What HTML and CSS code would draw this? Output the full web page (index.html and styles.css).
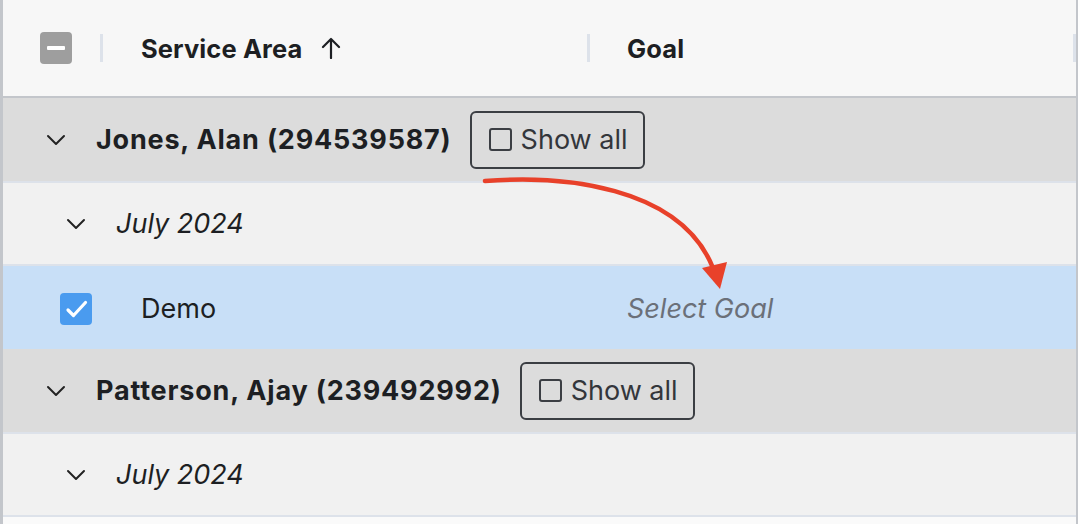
FILE: index.html
```html
<!DOCTYPE html>
<html>
<head>
<meta charset="utf-8">
<link rel="stylesheet" href="styles.css">
</head>
<body>
<div class="page">
  <div class="table">
    <div class="head">
      <div class="col-select">
        <span class="cb cb-mixed"><span class="bar"></span></span>
        <span class="sep"></span>
      </div>
      <div class="col-area">
        <span class="th">Service Area</span>
        <svg class="sort" width="20" height="22" viewBox="0 0 20 22"><path d="M10 21V2M2 10l8-8 8 8" fill="none" stroke="#1d1f23" stroke-width="2.2" stroke-linecap="round" stroke-linejoin="round"/></svg>
        <span class="sep sep-end"></span>
      </div>
      <div class="col-goal">
        <span class="th">Goal</span>
        <span class="sep sep-end"></span>
      </div>
    </div>

    <div class="row group">
      <svg class="chev" width="20" height="12" viewBox="0 0 20 12"><path d="M2 2l8 8 8-8" fill="none" stroke="#222" stroke-width="2" stroke-linecap="round" stroke-linejoin="round"/></svg>
      <span class="gname">Jones, Alan (294539587)</span>
      <span class="showall"><span class="box"></span>Show all</span>
    </div>
    <div class="row sub">
      <svg class="chev" width="20" height="12" viewBox="0 0 20 12"><path d="M2 2l8 8 8-8" fill="none" stroke="#222" stroke-width="2" stroke-linecap="round" stroke-linejoin="round"/></svg>
      <span class="month">July 2024</span>
    </div>
    <div class="row item selected">
      <div class="col-select">
        <span class="cb cb-checked"><svg width="32" height="32" viewBox="0 0 32 32"><path d="M8 17l5.5 5.5L25.5 9.5" fill="none" stroke="#fff" stroke-width="3.2" stroke-linecap="round" stroke-linejoin="round"/></svg></span>
      </div>
      <div class="col-area"><span class="cell">Demo</span></div>
      <div class="col-goal"><span class="placeholder">Select Goal</span></div>
    </div>
    <div class="row group">
      <svg class="chev" width="20" height="12" viewBox="0 0 20 12"><path d="M2 2l8 8 8-8" fill="none" stroke="#222" stroke-width="2" stroke-linecap="round" stroke-linejoin="round"/></svg>
      <span class="gname">Patterson, Ajay (239492992)</span>
      <span class="showall"><span class="box"></span>Show all</span>
    </div>
    <div class="row sub">
      <svg class="chev" width="20" height="12" viewBox="0 0 20 12"><path d="M2 2l8 8 8-8" fill="none" stroke="#222" stroke-width="2" stroke-linecap="round" stroke-linejoin="round"/></svg>
      <span class="month">July 2024</span>
    </div>
    <div class="rest"></div>
  </div>

  <svg class="annot" width="1084" height="524" viewBox="0 0 1084 524">
    <path d="M485 181 C 560 175, 680 185, 713 268" fill="none" stroke="#e8412a" stroke-width="4.5" stroke-linecap="round"/>
    <path d="M702 268 L727 262 L720 289 Z" fill="#e8412a"/>
  </svg>
</div>
</body>
</html>
```
FILE: styles.css
```css
* { box-sizing: border-box; }
html, body { margin: 0; padding: 0; background: #ffffff; }
body { font-family: Inter, "Noto Sans", "Liberation Sans", sans-serif; color: #1d1f23; }

.page { position: relative; width: 1084px; height: 524px; overflow: hidden; }

.table {
  width: 1078px;
  height: 524px;
  border-left: 3px solid #c3c6cb;
  border-right: 2px solid #c3c6cb;
  display: flex;
  flex-direction: column;
}

.head {
  height: 98px;
  flex: none;
  background: #f7f7f7;
  border-bottom: 2px solid #c3c6cb;
  display: flex;
  align-items: center;
}

.col-select { width: 100px; flex: none; display: flex; align-items: center; height: 100%; position: relative; }
.col-area { width: 487px; flex: none; display: flex; align-items: center; height: 100%; padding-left: 38px; position: relative; }
.col-goal { flex: 1; display: flex; align-items: center; height: 100%; padding-left: 37px; position: relative; }

.head .col-select { padding-left: 37px; }
.head .col-select .sep { margin-left: auto; }

.sep { width: 3px; height: 28px; background: #dde2ea; display: block; }
.sep-end { position: absolute; right: 0; top: 34px; }

.th { font-weight: 700; font-size: 25.5px; letter-spacing: 0.1px; }
.sort { margin-left: 19px; }

.cb { width: 32px; height: 32px; border-radius: 4px; display: inline-flex; align-items: center; justify-content: center; flex: none; }
.cb-mixed { background: #9e9e9e; }
.cb-mixed .bar { width: 18px; height: 4px; background: #fff; border-radius: 1px; }
.cb-checked { background: #4a9bef; }

.row { display: flex; align-items: center; flex: none; border-bottom: 2px solid #dde2ea; }
.group { height: 85px; background: #dcdcdc; padding-left: 43px; }
.sub { height: 83px; background: #f1f1f1; padding-left: 63px; }
.item { height: 83px; padding-top: 4px; }
.selected { background: #c8dff7; border-bottom-color: #c8dff7; }
.item .col-select { padding-left: 57px; }

.chev { display: block; flex: none; }
.group .chev { margin-right: 30px; }
.sub .chev { margin-right: 30px; }

.gname { font-weight: 700; font-size: 27px; letter-spacing: 0.8px; white-space: nowrap; }
.month { font-style: italic; font-size: 27px; }
.cell { font-size: 27px; }
.placeholder { font-size: 27px; font-style: italic; color: #6b7079; }

.showall {
  margin-left: 18px;
  height: 58px;
  padding: 0 15px 0 17px;
  border: 2px solid #3b3e43;
  border-radius: 6px;
  display: inline-flex;
  align-items: center;
  font-size: 27px;
  color: #33363b;
}
.showall .box {
  width: 23px;
  height: 23px;
  border: 2px solid #3b3e43;
  border-radius: 3px;
  margin-right: 9px;
  display: inline-block;
}

.rest { flex: 1; background: #fafafa; }

.annot { position: absolute; left: 0; top: 0; pointer-events: none; }
```
